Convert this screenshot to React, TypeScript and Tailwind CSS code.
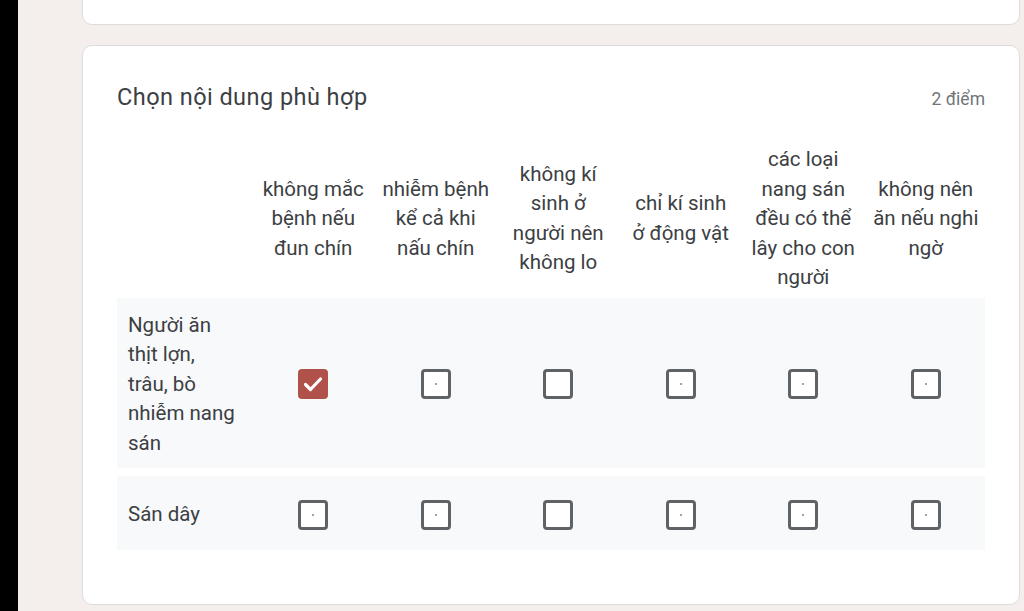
const columns: string[][] = [
  ['không mắc', 'bệnh nếu', 'đun chín'],
  ['nhiễm bệnh', 'kể cả khi', 'nấu chín'],
  ['không kí', 'sinh ở', 'người nên', 'không lo'],
  ['chỉ kí sinh', 'ở động vật'],
  ['các loại', 'nang sán', 'đều có thể', 'lây cho con', 'người'],
  ['không nên', 'ăn nếu nghi', 'ngờ'],
];

const rows = [
  { label: ['Người ăn', 'thịt lợn,', 'trâu, bò', 'nhiễm nang', 'sán'], checked: 0 },
  { label: ['Sán dây'], checked: -1 },
];

function Checkbox({ checked, dot }: { checked: boolean; dot: boolean }) {
  if (checked) {
    return (
      <div className="flex h-[30px] w-[30px] items-center justify-center rounded-[4px] bg-[#b0524a]">
        <svg width="24" height="24" viewBox="0 0 24 24" fill="none">
          <path d="M4.5 12.5l5 5L19.5 7" stroke="white" strokeWidth="3.2" strokeLinecap="round" strokeLinejoin="round" />
        </svg>
      </div>
    );
  }
  return (
    <div className="flex h-[30px] w-[30px] items-center justify-center rounded-[4px] border-[3px] border-[#5f6368] bg-white">
      {dot && <div className="h-[2px] w-[2px] rounded-full bg-[#80868b]" />}
    </div>
  );
}

export default function App() {
  return (
    <div className="flex h-[611px] w-[1024px] overflow-hidden bg-[#f4efed] font-['Roboto',sans-serif]">
      <div className="h-full w-[18px] shrink-0 bg-black" />
      <div className="flex flex-col gap-[20px] pl-[64px]">
        <div className="-mt-[20px] h-[45px] w-[938px] rounded-[10px] border border-[#dcdcdc] bg-white" />

        <div className="w-[938px] rounded-[10px] border border-[#dcdcdc] bg-white px-[34px] pb-[54px] pt-[37px]">
          <div className="flex h-[28px] items-center justify-between">
            <h2 className="text-[23.5px] leading-[28px] tracking-[0.45px] text-[#3c4043]">Chọn nội dung phù hợp</h2>
            <span className="mt-[4px] text-[17.5px] leading-[28px] text-[#70757a]">2 điểm</span>
          </div>

          <div className="mt-[34px] grid grid-cols-[135px_repeat(6,122.5px)] items-center pb-[5px] text-[20.5px] leading-[29.5px] text-[#3c4043]">
            <div />
            {columns.map((lines, i) => (
              <div key={i} className="flex flex-col items-center text-center">
                {lines.map((l) => (
                  <span key={l} className="whitespace-nowrap">{l}</span>
                ))}
              </div>
            ))}
          </div>

          <div className="flex flex-col gap-[8px]">
            {rows.map((row, r) => (
              <div
                key={r}
                className="grid min-h-[74px] grid-cols-[135px_repeat(6,122.5px)] items-center bg-[#f8f9fa] pb-[10px] pt-[13px] text-[20.5px] leading-[29.5px] text-[#3c4043]"
              >
                <div className="flex flex-col pl-[11px]">
                  {row.label.map((l) => (
                    <span key={l} className="whitespace-nowrap">{l}</span>
                  ))}
                </div>
                {columns.map((_, c) => (
                  <div key={c} className="flex justify-center">
                    <Checkbox checked={row.checked === c} dot={c !== 2} />
                  </div>
                ))}
              </div>
            ))}
          </div>
        </div>
      </div>
    </div>
  );
}
